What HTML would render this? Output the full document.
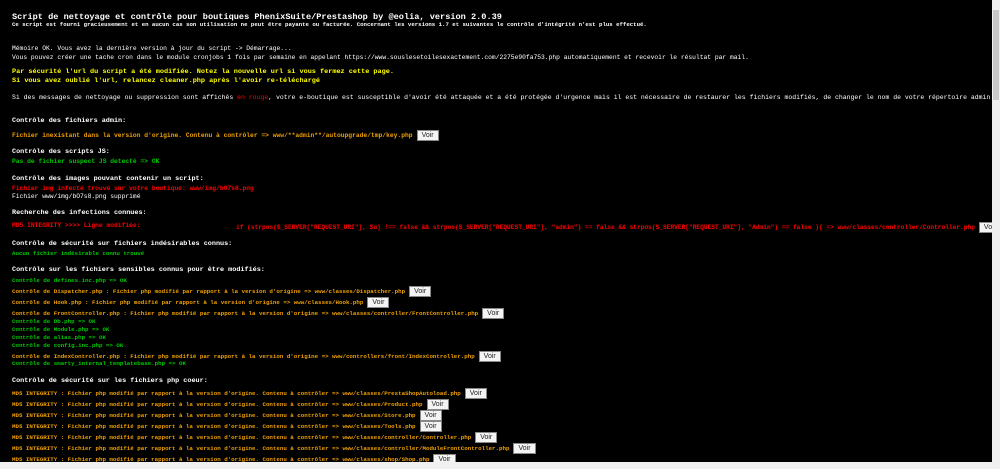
<!DOCTYPE html>
<html><head><meta charset="utf-8"><style>
html,body{margin:0;padding:0;background:#000;width:1000px;height:469px;overflow:hidden}
.l{position:absolute;left:12px;white-space:nowrap;font-family:"Liberation Mono","DejaVu Sans Mono",monospace;font-size:6.3px;line-height:8px;color:#fff;font-weight:bold}
.t{font-size:8.6px;line-height:10px}
.s{font-size:5.7px}
.h{font-size:6.8px}
.k{font-size:5.8px}
.w{font-size:6.85px}
.v{font-size:6.47px}
.n{font-weight:normal}
.y{color:#ffff00}.r{color:#f00}.g{color:#00c800}.o{color:#f0a000}
.b{display:inline-block;vertical-align:middle;margin-left:4px;background:#f4f4f4;border:1px solid #888;color:#222;font:normal 7px "Liberation Sans",sans-serif;height:9px;line-height:9px;padding:0 4px}
.vs{position:absolute;right:0;top:0;width:8px;height:462px;background:#f0f0f0}
.vt{position:absolute;right:1px;top:10px;width:6px;height:90px;background:#c8c8c8}
.hs{position:absolute;left:0;bottom:0;width:1000px;height:7px;background:#f0f0f0}
</style></head><body>
<div class="l t" style="top:12px">Script de nettoyage et contrôle pour boutiques PhenixSuite/Prestashop by @eolia, version 2.0.39</div>
<div class="l s" style="top:21px">Ce script est fourni gracieusement et en aucun cas son utilisation ne peut être payante ou facturée. Concernant les versions 1.7 et suivantes le contrôle d'intégrité n'est plus effectué.</div>
<div class="l n" style="top:45px">Mémoire OK. Vous avez la dernière version à jour du script -> Démarrage...</div>
<div class="l n" style="top:54px">Vous pouvez créer une tache cron dans le module cronjobs 1 fois par semaine en appelant https://www.souslesetoilesexactement.com/2275e90fa753.php automatiquement et recevoir le résultat par mail.</div>
<div class="l y w" style="top:68px">Par sécurité l'url du script a été modifiée. Notez la nouvelle url si vous fermez cette page.</div>
<div class="l y w" style="top:77px">Si vous avez oublié l'url, relancez cleaner.php après l'avoir re-téléchargé</div>
<div class="l n v" style="top:94px">Si des messages de nettoyage ou suppression sont affichés <span class="r">en rouge</span>, votre e-boutique est susceptible d'avoir été attaquée et a été protégée d'urgence mais il est nécessaire de restaurer les fichiers modifiés, de changer le nom de votre répertoire admin et de changer</div>
<div class="l h" style="top:117px">Contrôle des fichiers admin:</div>
<div class="l o" style="top:130px">Fichier inexistant dans la version d'origine. Contenu à contrôler => www/**admin**/autoupgrade/tmp/key.php<span class="b">Voir</span></div>
<div class="l h" style="top:148px">Contrôle des scripts JS:</div>
<div class="l g" style="top:158px">Pas de fichier suspect JS detecté => OK</div>
<div class="l h" style="top:175px">Contrôle des images pouvant contenir un script:</div>
<div class="l r" style="top:185px">Fichier img infecté trouvé sur votre boutique: www/img/bO7s8.png</div>
<div class="l n" style="top:193px">Fichier www/img/bO7s8.png supprimé</div>
<div class="l h" style="top:209px">Recherche des infections connues:</div>
<div class="l r" style="top:222px">MD5 INTEGRITY >>>> Ligne modifiée:</div>
<div class="l r" style="top:222px;left:236px;font-size:6.2px">if (strpos($_SERVER["REQUEST_URI"], $u) !== false && strpos($_SERVER["REQUEST_URI"], "admin") == false && strpos($_SERVER["REQUEST_URI"], "Admin") == false ){ => www/classes/controller/Controller.php<span class="b">Voir</span></div>
<div class="l h" style="top:240px">Contrôle de sécurité sur fichiers indésirables connus:</div>
<div class="l g k" style="top:250px">Aucun fichier indésirable connu trouvé</div>
<div class="l h" style="top:266px">Contrôle sur les fichiers sensibles connus pour être modifiés:</div>
<div class="l g k" style="top:277px">Contrôle de defines.inc.php => OK</div>
<div class="l o k" style="top:286px">Contrôle de Dispatcher.php : Fichier php modifié par rapport à la version d'origine => www/classes/Dispatcher.php<span class="b">Voir</span></div>
<div class="l o k" style="top:297px">Contrôle de Hook.php : Fichier php modifié par rapport à la version d'origine => www/classes/Hook.php<span class="b">Voir</span></div>
<div class="l o k" style="top:308px">Contrôle de FrontController.php : Fichier php modifié par rapport à la version d'origine => www/classes/controller/FrontController.php<span class="b">Voir</span></div>
<div class="l g k" style="top:318px">Contrôle de Db.php => OK</div>
<div class="l g k" style="top:326px">Contrôle de Module.php => OK</div>
<div class="l g k" style="top:334px">Contrôle de alias.php => OK</div>
<div class="l g k" style="top:342px">Contrôle de config.inc.php => OK</div>
<div class="l o k" style="top:351px">Contrôle de IndexController.php : Fichier php modifié par rapport à la version d'origine => www/controllers/front/IndexController.php<span class="b">Voir</span></div>
<div class="l g k" style="top:360px">Contrôle de smarty_internal_templatebase.php => OK</div>
<div class="l h" style="top:377px">Contrôle de sécurité sur les fichiers php coeur:</div>
<div class="l o k" style="top:388px">MD5 INTEGRITY : Fichier php modifié par rapport à la version d'origine. Contenu à contrôler => www/classes/PrestaShopAutoload.php<span class="b">Voir</span></div>
<div class="l o k" style="top:399px">MD5 INTEGRITY : Fichier php modifié par rapport à la version d'origine. Contenu à contrôler => www/classes/Product.php<span class="b">Voir</span></div>
<div class="l o k" style="top:410px">MD5 INTEGRITY : Fichier php modifié par rapport à la version d'origine. Contenu à contrôler => www/classes/Store.php<span class="b">Voir</span></div>
<div class="l o k" style="top:421px">MD5 INTEGRITY : Fichier php modifié par rapport à la version d'origine. Contenu à contrôler => www/classes/Tools.php<span class="b">Voir</span></div>
<div class="l o k" style="top:432px">MD5 INTEGRITY : Fichier php modifié par rapport à la version d'origine. Contenu à contrôler => www/classes/controller/Controller.php<span class="b">Voir</span></div>
<div class="l o k" style="top:443px">MD5 INTEGRITY : Fichier php modifié par rapport à la version d'origine. Contenu à contrôler => www/classes/controller/ModuleFrontController.php<span class="b">Voir</span></div>
<div class="l o k" style="top:454px">MD5 INTEGRITY : Fichier php modifié par rapport à la version d'origine. Contenu à contrôler => www/classes/shop/Shop.php<span class="b">Voir</span></div>
<div class="vs"><div class="vt"></div></div>
<div class="hs"></div>
</body></html>
